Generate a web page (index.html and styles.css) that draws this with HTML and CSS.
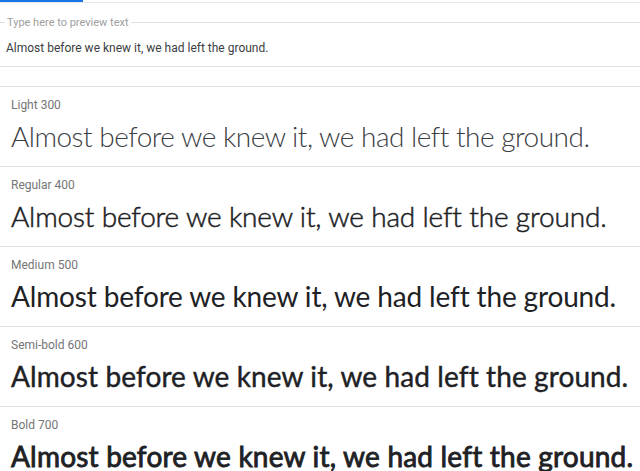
FILE: index.html
```html
<!DOCTYPE html>
<html lang="en">
<head>
    <meta charset="UTF-8">
    <meta name="viewport" content="width=device-width, initial-scale=1.0">
    <title>Quicksand specimen</title>
    <link rel="stylesheet" href="styles.css">
</head>
<body>
    <div class="tab-strip">
        <div class="tab-indicator"></div>
    </div>

    <fieldset class="preview-field">
        <legend>Type here to preview text</legend>
        <div class="preview-input">Almost before we knew it, we had left the ground.</div>
    </fieldset>

    <div class="toolbar"></div>

    <div class="styles-list">
        <div class="style-row">
            <div class="style-name">Light 300</div>
            <div class="sample w300">Almost before we knew it, we had left the ground.</div>
        </div>
        <div class="style-row">
            <div class="style-name">Regular 400</div>
            <div class="sample w400">Almost before we knew it, we had left the ground.</div>
        </div>
        <div class="style-row">
            <div class="style-name">Medium 500</div>
            <div class="sample w500">Almost before we knew it, we had left the ground.</div>
        </div>
        <div class="style-row">
            <div class="style-name">Semi-bold 600</div>
            <div class="sample w600">Almost before we knew it, we had left the ground.</div>
        </div>
        <div class="style-row">
            <div class="style-name">Bold 700</div>
            <div class="sample w700">Almost before we knew it, we had left the ground.</div>
        </div>
    </div>
</body>
</html>
```

FILE: styles.css
```css
body {
    font-family: Roboto, Arial, sans-serif;
    margin: 0;
    padding: 0;
    background-color: #fff;
    overflow: hidden;
}
.tab-strip {
    height: 2px;
    border-bottom: 1px solid #e8e8e8;
}
.tab-indicator {
    width: 83px;
    height: 2px;
    background-color: #1a73e8;
}
.preview-field {
    margin: 13px 0 0;
    padding: 0;
    border: none;
    border-top: 1px solid #e0e0e0;
}
.preview-field legend {
    margin-left: 5px;
    padding: 0 2px;
    font-size: 11px;
    color: #9e9e9e;
}
.preview-input {
    height: 38px;
    padding: 12px 0 0 6px;
    box-sizing: border-box;
    font-size: 12px;
    color: #3c4043;
    border-bottom: 1px solid #e0e0e0;
}
.toolbar {
    height: 19px;
}
.style-row {
    height: 79px;
    border-top: 1px solid #e0e0e0;
    padding: 0 11px;
}
.style-name {
    padding-top: 11px;
    font-size: 12px;
    color: #757575;
}
.sample {
    margin-top: 6px;
    font-family: Lato, sans-serif;
    font-size: 28px;
    line-height: 36px;
    color: #202124;
    white-space: nowrap;
}
.w300 { font-weight: 300; color: #3c4043; letter-spacing: -0.5px; }
.w400 { font-weight: 300; -webkit-text-stroke: 0.5px #202124; letter-spacing: -0.15px; }
.w500 { font-weight: 400; letter-spacing: -0.15px; }
.w600 { font-weight: 400; -webkit-text-stroke: 0.4px #202124; letter-spacing: 0.1px; }
.w700 { font-weight: 400; -webkit-text-stroke: 0.85px #202124; letter-spacing: 0.2px; }
```
